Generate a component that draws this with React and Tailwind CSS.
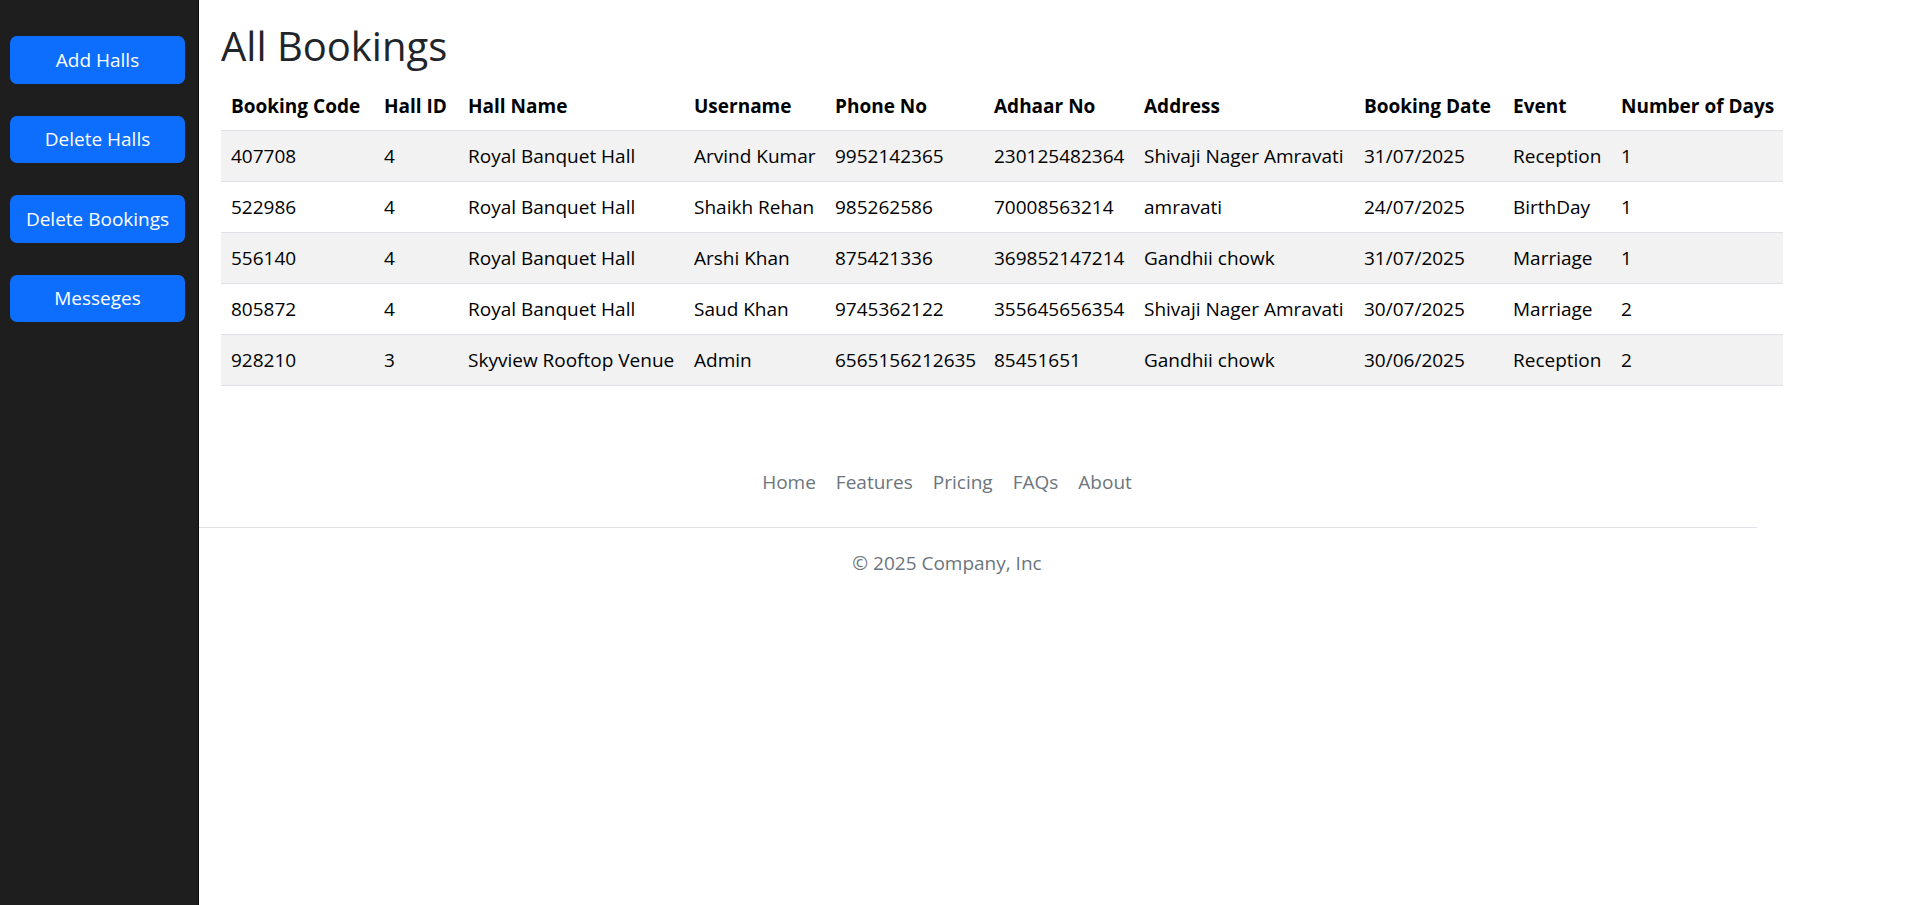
import React from 'react';

const columns = [
  { label: 'Booking Code', w: 'w-[153px]' },
  { label: 'Hall ID', w: 'w-[84px]' },
  { label: 'Hall Name', w: 'w-[226px]' },
  { label: 'Username', w: 'w-[141px]' },
  { label: 'Phone No', w: 'w-[159px]' },
  { label: 'Adhaar No', w: 'w-[150px]' },
  { label: 'Address', w: 'w-[220px]' },
  { label: 'Booking Date', w: 'w-[149px]' },
  { label: 'Event', w: 'w-[108px]' },
  { label: 'Number of Days', w: 'w-[172px]' },
];

const bookings = [
  ['407708', '4', 'Royal Banquet Hall', 'Arvind Kumar', '9952142365', '230125482364', 'Shivaji Nager Amravati', '31/07/2025', 'Reception', '1'],
  ['522986', '4', 'Royal Banquet Hall', 'Shaikh Rehan', '985262586', '70008563214', 'amravati', '24/07/2025', 'BirthDay', '1'],
  ['556140', '4', 'Royal Banquet Hall', 'Arshi Khan', '875421336', '369852147214', 'Gandhii chowk', '31/07/2025', 'Marriage', '1'],
  ['805872', '4', 'Royal Banquet Hall', 'Saud Khan', '9745362122', '355645656354', 'Shivaji Nager Amravati', '30/07/2025', 'Marriage', '2'],
  ['928210', '3', 'Skyview Rooftop Venue', 'Admin', '6565156212635', '85451651', 'Gandhii chowk', '30/06/2025', 'Reception', '2'],
];

const sideLinks = ['Add Halls', 'Delete Halls', 'Delete Bookings', 'Messeges'];
const footerLinks = ['Home', 'Features', 'Pricing', 'FAQs', 'About'];

export default function App() {
  return (
    <div className="flex min-h-screen bg-white font-['Open_Sans',sans-serif]">
      {/* Sidebar */}
      <aside className="w-[199px] h-screen shrink-0 bg-[#1e1e1e] border-r border-[#0b0b0b] flex flex-col gap-[32px] pt-[36px] pl-[10px]">
        {sideLinks.map(label => (
          <button
            key={label}
            className="w-[175px] h-[47.5px] rounded-[7px] bg-[#0d6efd] text-white text-[19px] leading-[30px]"
          >
            {label}
          </button>
        ))}
      </aside>

      {/* Main */}
      <main className="flex-1 flex flex-col">
        <div className="pl-[22px] pt-[22px]">
          <h1 className="text-[40px] leading-[48px] font-[500] text-[#212529] mb-[10px]">All Bookings</h1>

          <table className="table-fixed w-[1562px] text-[19px] leading-[30px] text-black border-collapse">
            <thead>
              <tr>
                {columns.map(col => (
                  <th
                    key={col.label}
                    className={`${col.w} px-[10px] pt-[11px] pb-[9px] text-left font-bold whitespace-nowrap border-b border-[#dee2e6]`}
                  >
                    {col.label}
                  </th>
                ))}
              </tr>
            </thead>
            <tbody>
              {bookings.map((row, i) => (
                <tr key={row[0]} className={i % 2 === 0 ? 'bg-[#f2f2f2]' : 'bg-white'}>
                  {row.map((cell, j) => (
                    <td key={j} className="px-[10px] py-[10px] whitespace-nowrap border-b border-[#dee2e6]">
                      {cell}
                    </td>
                  ))}
                </tr>
              ))}
            </tbody>
          </table>
        </div>

        {/* Footer */}
        <footer className="w-[1558px] mt-[71px]">
          <ul className="flex justify-center pr-[62px] pb-[20px] mb-[20px] border-b border-[#dee2e6]">
            {footerLinks.map(link => (
              <li key={link}>
                <a href="#" className="block px-[10px] py-[10px] text-[19px] leading-[30px] text-[#6c757d]">
                  {link}
                </a>
              </li>
            ))}
          </ul>
          <p className="pr-[62px] text-center text-[19px] leading-[30px] text-[#6c757d]">© 2025 Company, Inc</p>
        </footer>
      </main>
    </div>
  );
}
